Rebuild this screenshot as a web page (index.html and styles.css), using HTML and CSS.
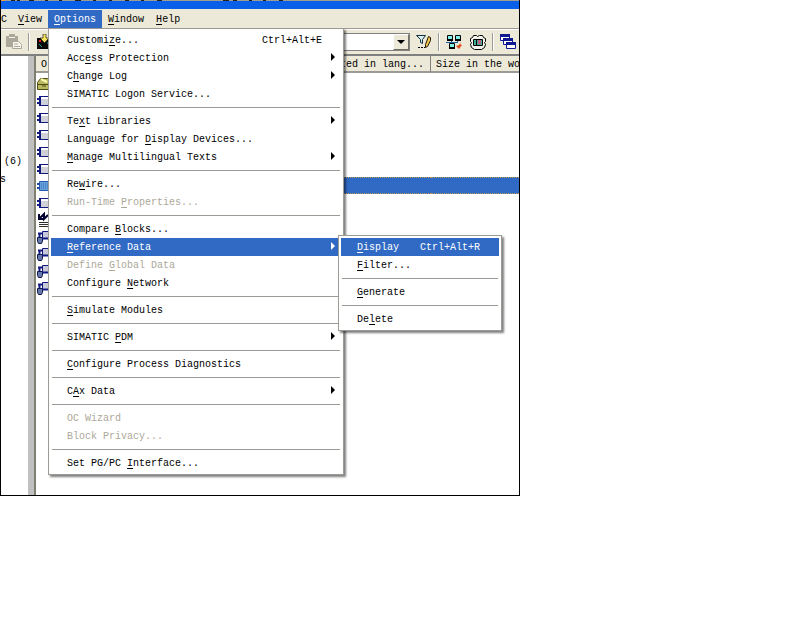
FILE: index.html
```html
<!DOCTYPE html>
<html lang="en">
<head>
    <meta charset="UTF-8">
    <meta name="viewport" content="width=device-width, initial-scale=1.0">
    <title>SIMATIC Manager</title>
    <link rel="stylesheet" href="styles.css">
</head>
<body>
    <svg class="sprites" aria-hidden="true">
        <symbol id="block" viewBox="0 0 16 16">
            <path d="M4.500 3.500h11v9h-11z" fill="#d0d0d8" stroke="#101880"/>
            <path d="M5 4h10v2H5z" fill="#fff"/>
            <path d="M4 12h12v1H4zM3 3h2v10H3zM1 5h3v2H1zM1 9h3v2H1z" fill="#101880"/>
        </symbol>
        <symbol id="data" viewBox="0 0 16 16">
            <path d="M6.500 2.500h9v7h-9z" fill="#c8c8d8" stroke="#101880"/>
            <path d="M2 4.500h4M3.500 4v4" fill="none" stroke="#101880" stroke-width="2"/>
            <path d="M1.500 8.500h5v4l-1 2h-3l-1-2z" fill="#6878a8" stroke="#101850"/>
            <path d="M6 9.500h10" stroke="#101880" stroke-width="2"/>
        </symbol>
    </svg>

    <div class="window">
        <div class="title-bar">
            <svg viewBox="0 0 518 2" preserveAspectRatio="none" aria-hidden="true">
                <path d="M0 0h4v2H0z" fill="#f0a040"/>
                <path d="M10 1h4M16 1h3M28 1h5M44 1h3M58 1h3M74 1h6M92 1h3M108 1h3M124 1h4M140 1h3M156 1h5M222 1h6M232 1h4M248 1h3M262 1h3M278 1h4" stroke="#202020" stroke-width="2"/>
            </svg>
        </div>

        <!-- Menu Bar -->
        <nav class="menu-bar">
            <button class="menu-title clipped">C</button>
            <button class="menu-title"><u>V</u>iew</button>
            <div class="menu-holder">
                <button class="menu-title open"><u>O</u>ptions</button>
                <div class="menu options-menu">
                    <button class="item">Customi<u>z</u>e...<span class="shortcut">Ctrl+Alt+E</span></button>
                    <button class="item parent">Acc<u>e</u>ss Protection</button>
                    <button class="item parent">C<u>h</u>ange Log</button>
                    <button class="item">SIMATIC Logon Service...</button>
                    <hr>
                    <button class="item parent">Te<u>x</u>t Libraries</button>
                    <button class="item">Language for <u>D</u>isplay Devices...</button>
                    <button class="item parent"><u>M</u>anage Multilingual Texts</button>
                    <hr>
                    <button class="item">Re<u>w</u>ire...</button>
                    <button class="item" disabled>Run-Time <u>P</u>roperties...</button>
                    <hr>
                    <button class="item">Compare <u>B</u>locks...</button>
                    <div class="menu-holder">
                        <button class="item parent active"><u>R</u>eference Data</button>
                        <div class="menu sub-menu">
                            <button class="item active"><u>D</u>isplay<span class="shortcut">Ctrl+Alt+R</span></button>
                            <button class="item"><u>F</u>ilter...</button>
                            <hr>
                            <button class="item"><u>G</u>enerate</button>
                            <hr>
                            <button class="item">De<u>l</u>ete</button>
                        </div>
                    </div>
                    <button class="item" disabled>Define <u>G</u>lobal Data</button>
                    <button class="item">Configure <u>N</u>etwork</button>
                    <hr>
                    <button class="item"><u>S</u>imulate Modules</button>
                    <hr>
                    <button class="item parent">SIMATIC <u>P</u>DM</button>
                    <hr>
                    <button class="item"><u>C</u>onfigure Process Diagnostics</button>
                    <hr>
                    <button class="item parent">C<u>A</u>x Data</button>
                    <hr>
                    <button class="item" disabled>OC Wizard</button>
                    <button class="item" disabled>Block Privacy...</button>
                    <hr>
                    <button class="item">Set PG/PC <u>I</u>nterface...</button>
                </div>
            </div>
            <button class="menu-title"><u>W</u>indow</button>
            <button class="menu-title"><u>H</u>elp</button>
        </nav>

        <!-- Toolbar -->
        <div class="toolbar">
            <button class="tool" aria-label="Paste" disabled>
                <svg viewBox="0 0 16 16">
                    <path d="M0 2h12v11H0z" fill="#aca899"/>
                    <path d="M3 0h6v3H3z" fill="#aca899"/>
                    <path d="M3 3h6v1H3z" fill="#f4f2e8"/>
                    <path d="M6.500 7.500h6l3 3v4h-9z" fill="#f8f6ee" stroke="#aca899"/>
                    <path d="M8 10h4M8 12.500h6" stroke="#aca899"/>
                </svg>
            </button>
            <span class="divider"></span>
            <button class="tool" aria-label="Download">
                <svg viewBox="0 0 16 16">
                    <path d="M1 4h15v11H1z" fill="#080808"/>
                    <path d="M3 6h2v2H3z" fill="#e02020"/>
                    <path d="M3 10l3 3M11 9h4v4" stroke="#20a0a0" fill="none"/>
                    <path d="M7 0h3v4h3L8.500 9 4 4h3z" fill="#f8e860" stroke="#000" stroke-width=".6"/>
                </svg>
            </button>
            <div class="combo">
                <select aria-label="Filter"><option></option></select>
                <span class="combo-arrow"></span>
            </div>
            <button class="tool" aria-label="Edit filter">
                <svg viewBox="0 0 16 16">
                    <path d="M.5 1.500h9l-3 4v4l-2-1v-3z" fill="#d8f0f0" stroke="#103040"/>
                    <path d="M12.500 2.500l2 1v3l-3 6-2 1v-3z" fill="#f0c850" stroke="#201800"/>
                    <path d="M2 13h2v1H2zM5 13h2v1H5zM8 13h1v1H8z" fill="#000"/>
                </svg>
            </button>
            <span class="divider"></span>
            <button class="tool" aria-label="Configure network">
                <svg viewBox="0 0 16 16">
                    <path d="M1.500 1.500h5v4h-5zM9.500 1.500h5v4h-5zM3.500 9.500h5v4h-5z" fill="#80f0e8" stroke="#000"/>
                    <path d="M1 5h6v2H1zM9 5h6v2H9zM3 13h6v2H3z" fill="#000"/>
                    <path d="M0 8.500h12M5.500 7v2M11.500 7v2" stroke="#2060a0" fill="none"/>
                    <path d="M15 7l-1 3 2 1-3 4-3-3 3-1z" fill="#e05020"/>
                </svg>
            </button>
            <button class="tool" aria-label="Simulation">
                <svg viewBox="0 0 16 16">
                    <path d="M3.500 1.500h3l1 1 2-1h3l1 2 2 1v3l-1 1 1 2-1 3-3 2h-7l-3-2-1-3 1-2-1-1v-3l2-1z" fill="#f4f4ec" stroke="#000"/>
                    <path d="M3.500 5.500h9v6h-9z" fill="#40b098" stroke="#000"/>
                    <path d="M6.500 6v5" stroke="#000"/>
                    <path d="M8 6h3v4H8z" fill="#c06080"/>
                </svg>
            </button>
            <span class="divider"></span>
            <button class="tool" aria-label="Cascade windows">
                <svg viewBox="0 0 16 16">
                    <g fill="#fff" stroke="#101890">
                        <path d="M.5.5h9v6h-9zM3.500 4.500h9v6h-9zM6.500 8.500h9v6h-9z"/>
                    </g>
                    <path d="M0 0h10v3H0zM3 4h10v3H3zM6 8h10v3H6z" fill="#101890"/>
                </svg>
            </button>
        </div>

        <!-- Project Window -->
        <main class="content">
            <div class="tree">
                <span>(6)</span>
                <span class="cut">s</span>
            </div>
            <div class="splitter"></div>
            <div class="list">
                <table>
                    <thead>
                        <tr>
                            <th>O</th>
                            <th class="lang">Created in lang...</th>
                            <th class="size">Size in the wo</th>
                        </tr>
                    </thead>
                    <tbody>
                        <tr>
                            <td>
                                <svg viewBox="0 0 16 16">
                                    <path d="M1.500 6.500l3-4h7l4 4v7h-14z" fill="#b8b860" stroke="#504c10"/>
                                    <path d="M5 3l6 3" stroke="#fff8b0" stroke-width="2"/>
                                    <path d="M1 8.500h14M6 10h4" stroke="#504c10"/>
                                </svg>
                            </td>
                            <td></td><td></td>
                        </tr>
                        <tr><td><svg><use href="#block"/></svg></td><td></td><td></td></tr>
                        <tr><td><svg><use href="#block"/></svg></td><td></td><td></td></tr>
                        <tr><td><svg><use href="#block"/></svg></td><td></td><td></td></tr>
                        <tr><td><svg><use href="#block"/></svg></td><td></td><td></td></tr>
                        <tr><td><svg><use href="#block"/></svg></td><td></td><td></td></tr>
                        <tr class="selected">
                            <td>
                                <svg viewBox="0 0 16 16">
                                    <path d="M3.500 3.500h12v9h-12z" fill="#68a0d8" stroke="#2858b0"/>
                                    <path d="M5 6h10M5 8h10M5 10h10" stroke="#3070c0" stroke-dasharray="1 1"/>
                                    <path d="M1 5h3v2H1zM1 9h3v2H1z" fill="#2048a0"/>
                                </svg>
                            </td>
                            <td></td><td></td>
                        </tr>
                        <tr><td><svg><use href="#block"/></svg></td><td></td><td></td></tr>
                        <tr>
                            <td>
                                <svg viewBox="0 0 16 16">
                                    <path d="M3 2v5h5M3 7l5-5v5l4-4" fill="none" stroke="#000030" stroke-width="2"/>
                                    <path d="M3 10.500h12M3 12.500h12M3 14.500h12" stroke="#303030"/>
                                </svg>
                            </td>
                            <td></td><td></td>
                        </tr>
                        <tr><td><svg><use href="#data"/></svg></td><td></td><td></td></tr>
                        <tr><td><svg><use href="#data"/></svg></td><td></td><td></td></tr>
                        <tr><td><svg><use href="#data"/></svg></td><td></td><td></td></tr>
                        <tr><td><svg><use href="#data"/></svg></td><td></td><td></td></tr>
                    </tbody>
                </table>
            </div>
        </main>
    </div>
</body>
</html>
```
FILE: styles.css
```css
* {
    margin: 0;
    padding: 0;
    box-sizing: border-box;
}

:root {
    --face: #ece9d8;
    --highlight: #316ac5;
    --title: #0a5fe8;
    --shadow: #9c9a94;
    --disabled: #aca899;
}

body {
    background-color: #fff;
    color: #000;
    font: 10px/18px "Liberation Mono", monospace;
}

button, select {
    font: inherit;
    color: inherit;
    border: none;
    background: none;
}

u {
    text-underline-offset: 2px;
}

.sprites {
    display: none;
}

.window {
    width: 100%;
    max-width: 520px;
    border: 1px solid #000;
    border-top: none;
}

.title-bar {
    height: 9px;
    background-color: var(--title);
}

.title-bar svg {
    display: block;
    width: 100%;
    height: 1px;
    background-color: #a09c90;
}

/* Menu Bar */
.menu-bar {
    display: flex;
    padding-top: 1px;
    background-color: var(--face);
}

.menu-title {
    display: block;
    height: 18px;
    padding: 2px 6px 0;
    line-height: 16px;
}

.menu-title.clipped {
    padding: 2px 5px 0 0;
}

.menu-title.open {
    background-color: var(--highlight);
    color: #fff;
}

.menu-holder {
    position: relative;
}

/* Drop-down Menus */
.menu {
    position: absolute;
    z-index: 10;
    padding: 2px;
    border: 1px solid var(--shadow);
    background-color: #fff;
    box-shadow: 2px 2px 2px rgba(0, 0, 0, 0.5);
}

.options-menu {
    top: 100%;
    left: 0;
    width: 296px;
}

.sub-menu {
    top: -3px;
    left: calc(100% - 3px);
    width: 164px;
}

.item {
    display: flex;
    align-items: center;
    width: 100%;
    height: 18px;
    padding: 2px 19px 0 16px;
    line-height: 16px;
    white-space: pre;
    text-align: left;
}

.item:disabled {
    color: var(--disabled);
}

.item.active {
    background-color: var(--highlight);
    color: #fff;
}

.shortcut {
    margin-left: auto;
}

.item.parent {
    padding-right: 6px;
}

.item.parent::after {
    content: "";
    margin: 0 0 4px auto;
    border: 4px solid transparent;
    border-left-color: currentColor;
    border-right: none;
}

.menu hr {
    height: 1px;
    margin: 4px 1px;
    border: none;
    background-color: var(--shadow);
}

/* Toolbar */
.toolbar {
    display: flex;
    align-items: center;
    height: 28px;
    padding: 0 3px 0 5px;
    border-top: 1px solid var(--shadow);
    border-bottom: 2px solid #808080;
    background-color: var(--face);
    box-shadow: inset 0 1px #fff;
}

.tool {
    width: 16px;
    height: 16px;
}

.tool svg {
    display: block;
    width: 16px;
    height: 16px;
}

.tool + .tool {
    margin-left: 8px;
}

.divider {
    width: 2px;
    height: 18px;
    margin: 0 6px;
    border-left: 1px solid var(--shadow);
    border-right: 1px solid #fff;
}

.combo {
    display: flex;
    flex: 1;
    position: relative;
    margin: 0 6px 0 60px;
}

.combo select {
    flex: 1;
    height: 18px;
    appearance: none;
    border: 1px solid #808080;
    background-color: #fff;
}

.combo-arrow {
    position: absolute;
    top: 1px;
    right: 1px;
    width: 16px;
    height: 16px;
    border: 1px solid;
    border-color: #fff #716f64 #716f64 #fff;
    background-color: var(--face);
    pointer-events: none;
}

.combo-arrow::after {
    content: "";
    display: block;
    margin: 5px 3px;
    border: 4px solid transparent;
    border-top-color: #000;
    border-bottom: none;
}

/* Project Window */
.content {
    display: flex;
    min-height: 439px;
}

.tree {
    display: flex;
    flex-direction: column;
    width: 27px;
    padding: 97px 0 0 3px;
}

.cut {
    margin-left: -4px;
}

.splitter {
    width: 8px;
    border-right: 2px solid #808070;
    background-color: #c0c0c0;
}

.list {
    flex: 1;
    min-width: 0;
    overflow: hidden;
}

.list table {
    width: 100%;
    table-layout: fixed;
    border-collapse: separate;
    border-spacing: 0;
}

.list th {
    height: 17px;
    padding: 3px 0 0 5px;
    border-right: 1px solid #808080;
    border-bottom: 2px solid var(--shadow);
    background-color: var(--face);
    font-weight: normal;
    line-height: 12px;
    text-align: left;
    white-space: nowrap;
}

.list .lang {
    width: 120px;
}

.list .size {
    width: 88px;
    border-right: none;
}

.list tbody::before {
    content: "";
    display: block;
    height: 2px;
}

.list td {
    height: 17px;
    line-height: 0;
}

.list td svg {
    width: 16px;
    height: 16px;
}

.selected td + td {
    border: 1px dotted #c09850;
    border-width: 1px 0;
    background-color: var(--highlight);
}
```
